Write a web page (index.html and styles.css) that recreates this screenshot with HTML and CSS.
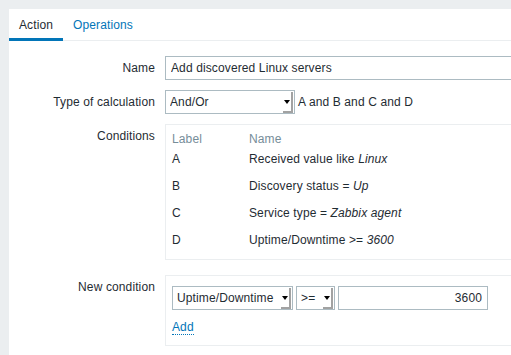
FILE: index.html
```html
<!DOCTYPE html>
<html>
<head>
<meta charset="utf-8">
<title>Action</title>
<link rel="stylesheet" href="styles.css">
</head>
<body>
<div class="panel">
  <nav class="tabs">
    <a class="tab active">Action</a>
    <a class="tab">Operations</a>
  </nav>
  <form class="form">
    <label class="lbl">Name</label>
    <div class="ctl"><input class="text name-input" type="text" value="Add discovered Linux servers"></div>

    <label class="lbl">Type of calculation</label>
    <div class="ctl inline">
      <span class="sel sel-calc"><select><option>And/Or</option></select><span class="arrow"></span></span>
      <span class="expr">A and B and C and D</span>
    </div>

    <label class="lbl lbl-top">Conditions</label>
    <div class="ctl">
      <div class="box">
        <table class="cond">
          <thead><tr><th class="c-label">Label</th><th>Name</th></tr></thead>
          <tbody>
            <tr><td>A</td><td>Received value like <em>Linux</em></td></tr>
            <tr><td>B</td><td>Discovery status = <em>Up</em></td></tr>
            <tr><td>C</td><td>Service type = <em>Zabbix agent</em></td></tr>
            <tr><td>D</td><td>Uptime/Downtime &gt;= <em>3600</em></td></tr>
          </tbody>
        </table>
      </div>
    </div>

    <label class="lbl lbl-top spaced">New condition</label>
    <div class="ctl spaced">
      <div class="box box-new">
        <div class="new-row">
          <span class="sel sel-type"><select><option>Uptime/Downtime</option></select><span class="arrow"></span></span>
          <span class="sel sel-op"><select><option>&gt;=</option></select><span class="arrow"></span></span>
          <input class="text value-input" type="text" value="3600">
        </div>
        <a class="add-link">Add</a>
      </div>
    </div>
  </form>
</div>
</body>
</html>
```

FILE: styles.css
```css
html {
  overflow: hidden;
  height: 100%;
}
html, body {
  margin: 0;
  padding: 0;
}
body {
  background: #ebeef0;
  font-family: "Liberation Sans", Arial, sans-serif;
  font-size: 12px;
  letter-spacing: 0.12px;
  color: #1f2c33;
  overflow: hidden;
  padding: 9px 0 0 9px;
  height: 100%;
  box-sizing: border-box;
}
.panel {
  background: #fff;
  height: 100%;
  overflow: hidden;
}
.tabs {
  display: flex;
  border-bottom: 1px solid #ebeef0;
  height: 31px;
}
.tab {
  display: block;
  padding: 3px 10px 0;
  line-height: 26px;
  height: 26px;
  border-bottom: 3px solid transparent;
  color: #0275b8;
  cursor: pointer;
}
.tab.active {
  color: #1f2c33;
  border-bottom-color: #0275b8;
}
.form {
  display: grid;
  grid-template-columns: 146px 700px;
  column-gap: 10px;
  row-gap: 10px;
  padding-top: 15px;
  align-items: start;
}
.lbl {
  text-align: right;
  line-height: 24px;
  white-space: nowrap;
}
.lbl-top {
  line-height: 14px;
  padding-top: 5px;
}
.spaced {
  margin-top: 5px;
}
.ctl.inline {
  display: flex;
  align-items: center;
}
.text {
  box-sizing: border-box;
  height: 24px;
  border: 1px solid #acbbc2;
  padding: 0 5px;
  font: inherit;
  letter-spacing: inherit;
  color: #1f2c33;
  background: #fff;
  margin: 0;
  outline: none;
}
.name-input {
  width: 453px;
  display: block;
  border-right: 0;
}
.sel {
  position: relative;
  display: inline-block;
  height: 24px;
}
.sel select {
  appearance: none;
  -webkit-appearance: none;
  box-sizing: border-box;
  height: 24px;
  width: 100%;
  border: 1px solid #acbbc2;
  border-radius: 0;
  background: #fff;
  font: inherit;
  letter-spacing: inherit;
  color: #1f2c33;
  padding: 0 4px;
  margin: 0;
  display: block;
  outline: none;
}
.sel .arrow {
  position: absolute;
  top: 2px;
  right: 2px;
  width: 8px;
  height: 19px;
  border-right: 2px solid #a2a2a2;
  border-bottom: 2px solid #a2a2a2;
  pointer-events: none;
}
.sel .arrow::after {
  content: "";
  position: absolute;
  left: 1px;
  top: 8px;
  border-left: 3px solid transparent;
  border-right: 3px solid transparent;
  border-top: 4px solid #000;
}
.sel-calc { width: 130px; }
.sel-type { width: 121px; }
.sel-op { width: 39px; }
.expr {
  margin-left: 3px;
}
.box {
  border: 1px solid #ebeef0;
  border-right: 0;
  box-sizing: border-box;
  width: 600px;
  background: #fff;
}
.cond {
  border-collapse: collapse;
  margin-left: 6px;
}
.cond th {
  font-weight: normal;
  color: #768d99;
  text-align: left;
  line-height: 14px;
  padding: 7px 0 6px 0;
}
.cond th.c-label {
  width: 77px;
}
.cond td {
  line-height: 14px;
  padding: 0 0 13px 0;
}
.cond tbody tr:last-child td {
  padding-bottom: 12px;
}
.box-new {
  padding: 10px 6px 10px 6px;
}
.new-row {
  display: flex;
  gap: 3px;
}
.value-input {
  width: 150px;
  text-align: right;
}
.add-link {
  display: inline-block;
  margin-top: 10px;
  line-height: 14px;
  color: #0275b8;
  border-bottom: 1px dotted #0275b8;
  cursor: pointer;
}
```
